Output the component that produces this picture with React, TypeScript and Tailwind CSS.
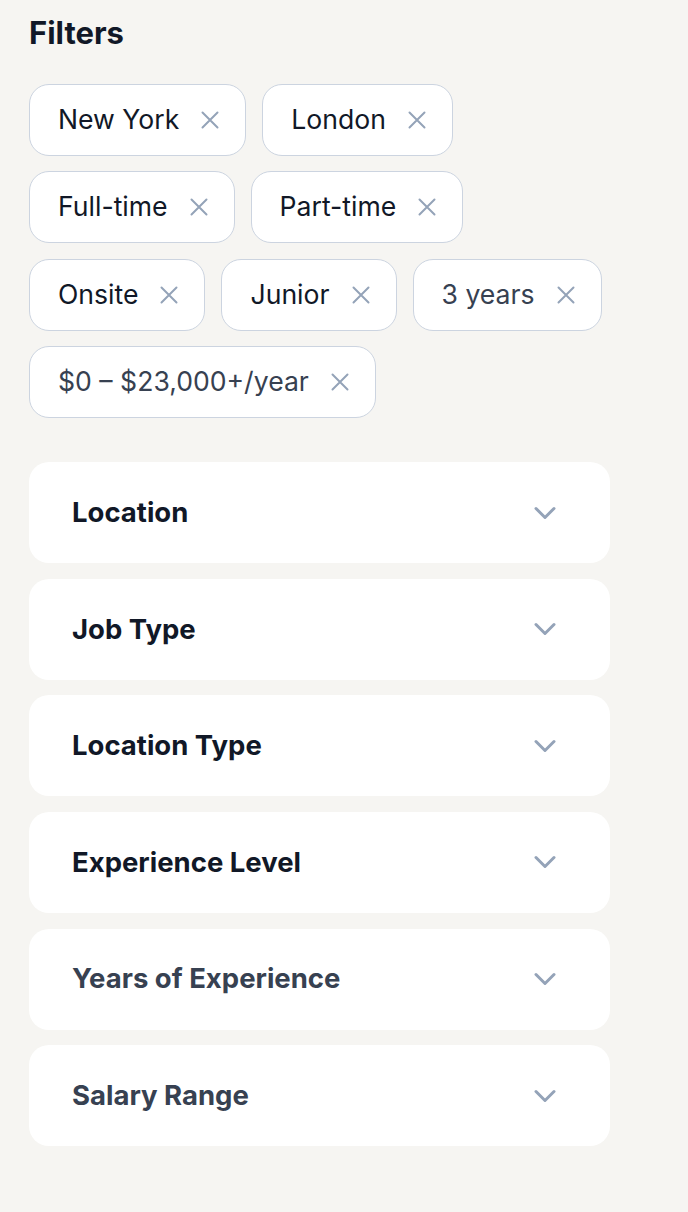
import React from "react";

const chips = [
  [{ label: "New York" }, { label: "London" }],
  [{ label: "Full-time" }, { label: "Part-time" }],
  [{ label: "Onsite" }, { label: "Junior" }, { label: "3 years", muted: true }],
  [{ label: "$0 – $23,000+/year", muted: true }],
];

const sections = [
  { title: "Location" },
  { title: "Job Type" },
  { title: "Location Type" },
  { title: "Experience Level" },
  { title: "Years of Experience", muted: true },
  { title: "Salary Range", muted: true },
];

function XIcon() {
  return (
    <svg width="18" height="18" viewBox="0 0 18 18" fill="none" stroke="#94a3b8" strokeWidth="2" strokeLinecap="round">
      <path d="M1.5 1.5l15 15M16.5 1.5l-15 15" />
    </svg>
  );
}

function Chevron() {
  return (
    <svg width="22" height="14" viewBox="0 0 22 14" fill="none" stroke="#94a3b8" strokeWidth="3" strokeLinecap="round" strokeLinejoin="round">
      <path d="M2 2.5l9 9 9-9" />
    </svg>
  );
}

export default function App() {
  return (
    <div className="min-h-[1212px] w-full bg-[#f6f5f2] pl-[29px] pr-[78px] pt-[16px] font-['Inter',sans-serif]">
      <h1 className="text-[31px] font-bold leading-[34px] text-[#111827]">Filters</h1>

      <div className="mt-[34px] flex flex-col gap-[15.4px]">
        {chips.map((row, i) => (
          <div key={i} className="flex gap-[16px]">
            {row.map((c) => (
              <div
                key={c.label}
                className="flex h-[72px] items-center gap-[22px] rounded-[20px] border-[1.5px] border-[#ccd4e0] bg-white pl-[28px] pr-[26px]"
              >
                <span className={`text-[26.6px] ${c.muted ? "text-[#374151]" : "text-[#111827]"}`}>{c.label}</span>
                <XIcon />
              </div>
            ))}
          </div>
        ))}
      </div>

      <div className="mt-[44px] flex flex-col gap-[15.6px]">
        {sections.map((s) => (
          <div
            key={s.title}
            className="flex h-[101px] items-center justify-between rounded-[20px] bg-white pl-[43px] pr-[54px]"
          >
            <span className={`text-[27.5px] font-bold ${s.muted ? "text-[#374151]" : "text-[#111827]"}`}>{s.title}</span>
            <Chevron />
          </div>
        ))}
      </div>
    </div>
  );
}
